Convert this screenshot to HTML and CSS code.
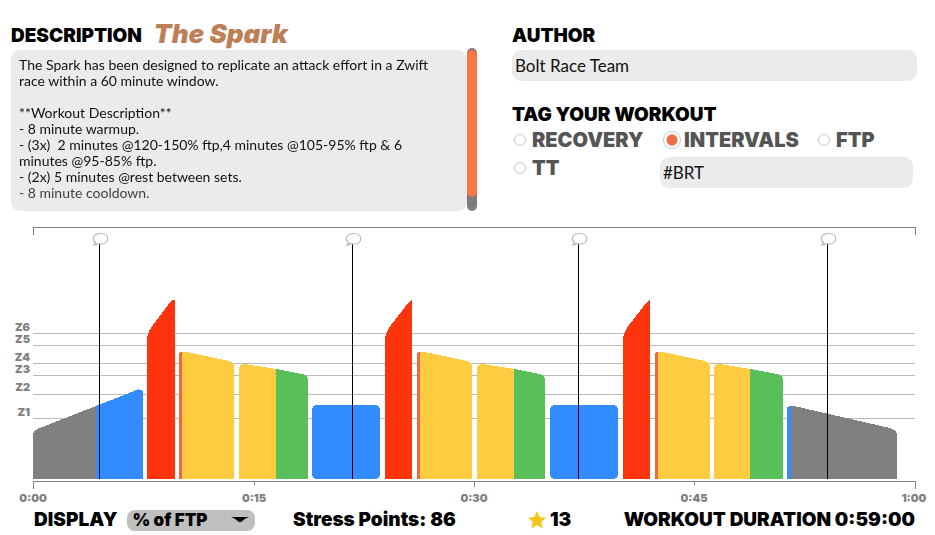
FILE: index.html
```html
<!DOCTYPE html>
<html lang="en">
<head>
<meta charset="utf-8">
<meta name="viewport" content="width=device-width, initial-scale=1">
<title>The Spark</title>
<link rel="stylesheet" href="styles.css">
</head>
<body>
<main class="page">
  <div class="details">
    <section class="description">
      <div class="title-row">
        <h2 class="heading"><label for="description">DESCRIPTION</label></h2>
        <h1 class="workout-name">The Spark</h1>
      </div>
      <div class="description-body">
        <div class="description-box">
          <textarea id="description" class="description-text" spellcheck="false">The Spark has been designed to replicate an attack effort in a Zwift race within a 60 minute window.

**Workout Description**
- 8 minute warmup.
- (3x)  2 minutes @120-150% ftp,4 minutes @105-95% ftp &amp; 6 minutes @95-85% ftp.
- (2x) 5 minutes @rest between sets.
- 8 minute cooldown.</textarea>
        </div>
        <div class="scroll-track"><div class="scroll-thumb"></div></div>
      </div>
    </section>

    <section class="meta">
      <h2 class="heading"><label for="author">AUTHOR</label></h2>
      <input id="author" class="field" type="text" value="Bolt Race Team">
      <h2 class="heading tag-heading">TAG YOUR WORKOUT</h2>
      <div class="tags">
        <label class="tag"><input type="radio" name="tag">RECOVERY</label>
        <label class="tag"><input type="radio" name="tag" checked>INTERVALS</label>
        <label class="tag"><input type="radio" name="tag">FTP</label>
        <label class="tag"><input type="radio" name="tag">TT</label>
        <input class="field custom-tag" type="text" value="#BRT" aria-label="Custom tag">
      </div>
    </section>
  </div>

  <svg class="chart" viewBox="0 220 935 285" role="img" aria-label="Workout power profile">
    <defs>
      <g id="bubble" fill="#fff" stroke="#b5b5b5" stroke-width="1.2">
        <path d="M-4 3.4C-8.500 0-6-5.500 1.500-5.500C10.500-5.500 10.500 4.800 1.500 5Q-.5 5.100-2 4.500Q-3 5.700-5.500 6Q-4 4.800-4 3.400Z"/>
      </g>
    </defs>
    <g class="zones">
      <path d="M33 333.500H915M33 345.500H915M33 363.500H915M33 375.500H915M33 394.500H915M33 418.500H915"/>
    </g>
    <g class="zone-labels">
      <text x="30" y="331">Z6</text>
      <text x="30" y="343">Z5</text>
      <text x="30" y="361">Z4</text>
      <text x="30" y="373">Z3</text>
      <text x="30" y="391">Z2</text>
      <text x="30" y="416">Z1</text>
    </g>
    <g class="axis">
      <path d="M33.500 235V227.500H915.500V235"/>
      <path d="M33.500 489V481.500H915.500V489M254.500 482V485M474.500 482V487M694.500 482V485"/>
    </g>
    <g class="bars">
      <path class="gray" d="M33 479V434Q35 429 41 427.500L96 406V479Z"/>
      <path class="blue" d="M96 479V406L138 389.500Q142 389 143 392V479Z"/>
      <path class="red" d="M147 479V337Q149 330 153 325L171 301Q172 300 175 300V479Z"/>
      <path class="orange" d="M179 479V355Q179 352 182 352V479Z"/>
      <path class="yellow" d="M182 479V352H187L229 361Q234 362 234 367V479Z"/>
      <path class="yellow" d="M239 479V369Q239 364 245 364L276 369V479Z"/>
      <path class="green" d="M276 479V369L302 374Q308 375 308 380V479Z"/>
      <rect class="blue" x="312" y="405" width="68" height="74" rx="5"/>

      <path class="red" d="M385 479V338Q387 330 391 325L409 302Q411 300 412 300V479Z"/>
      <path class="orange" d="M417 479V355Q417 352 420 352V479Z"/>
      <path class="yellow" d="M420 479V352H425L467 361Q472 363 472 367V479Z"/>
      <path class="yellow" d="M477 479V369Q477 364 483 364L514 369V479Z"/>
      <path class="green" d="M514 479V369L539 374Q545 375 545 380V479Z"/>
      <rect class="blue" x="550" y="405" width="68" height="74" rx="5"/>

      <path class="red" d="M623 479V338Q625 330 629 325L647 302Q649 300 650 300V479Z"/>
      <path class="orange" d="M655 479V355Q655 352 658 352V479Z"/>
      <path class="yellow" d="M658 479V352H663L705 361Q710 363 710 367V479Z"/>
      <path class="yellow" d="M714 479V369Q714 364 720 364L750 369V479Z"/>
      <path class="green" d="M750 479V369L777 374Q783 375 783 380V479Z"/>
      <path class="blue" d="M787 479V409Q787 406 791 406V479Z"/>
      <path class="gray" d="M791 479V406H794L890 428Q897 430 897 435V479Z"/>
    </g>
    <g class="markers">
      <path d="M99.500 244V479M352.500 244V479M578.500 244V479M827.500 244V479"/>
    </g>
    <use href="#bubble" x="99.500" y="239"/>
    <use href="#bubble" x="352.500" y="239"/>
    <use href="#bubble" x="578.500" y="239"/>
    <use href="#bubble" x="827.500" y="239"/>
    <g class="time-labels">
      <text x="33" y="502">0:00</text>
      <text x="254" y="502">0:15</text>
      <text x="474" y="502">0:30</text>
      <text x="694" y="502">0:45</text>
      <text x="914" y="502">1:00</text>
    </g>
  </svg>

  <footer class="summary">
    <div class="display">
      <label for="display">DISPLAY</label>
      <span class="select-wrap">
        <select id="display"><option>% of FTP</option><option>Watts</option></select>
        <svg class="caret" viewBox="0 0 18 6" aria-hidden="true"><path d="M0 0H18Q14 1 12 3.500Q9 7 6 3.500Q4 1 0 0Z"/></svg>
      </span>
    </div>
    <div>Stress Points: 86</div>
    <div class="stars">
      <svg class="star" viewBox="0 0 20 20" aria-hidden="true"><path d="M10 1L12.700 7L19 7.700L14.300 12L15.600 18.500L10 15.200L4.400 18.500L5.700 12L1 7.700L7.300 7Z"/></svg>
      <span>13</span>
    </div>
    <div class="duration">WORKOUT DURATION 0:59:00</div>
  </footer>
</main>
</body>
</html>
```
FILE: styles.css
```css
* {
  box-sizing: border-box;
}

body {
  margin: 0;
  background: #fff;
  color: #000;
  font-family: Lato, "Liberation Sans", sans-serif;
}

.page {
  padding-top: 22px;
}

.details {
  display: grid;
  grid-template-columns: 466fr 405fr;
  gap: 35px;
  padding: 0 18px 0 11px;
}

.heading,
.workout-name {
  margin: 0;
  height: 28px;
  line-height: 28px;
  white-space: nowrap;
}

.heading {
  font-family: Inter, sans-serif;
  font-size: 19px;
  font-weight: 900;
}

.title-row {
  display: flex;
  gap: 12px;
}

.workout-name {
  color: #bc7f58;
  font-family: Inter, sans-serif;
  font-size: 26px;
  font-style: italic;
  font-weight: 900;
  line-height: 24px;
}

.description-body {
  display: flex;
  height: 161px;
}

.description-box {
  flex: 1;
  padding: 7px 20px 4px 8px;
  border-radius: 9px;
  background: #ebebeb;
}

.description-text {
  display: block;
  width: 100%;
  height: 100%;
  padding: 0;
  border: 0;
  outline: 0;
  resize: none;
  overflow: hidden;
  background: transparent;
  color: #111;
  font-family: Lato, sans-serif;
  font-size: 14px;
  line-height: 16px;
  -webkit-mask-image: linear-gradient(#000 125px, rgba(0, 0, 0, 0.8) 130px);
  mask-image: linear-gradient(#000 125px, rgba(0, 0, 0, 0.8) 130px);
}

.scroll-track {
  width: 10px;
  margin-top: -2px;
  padding-top: 2px;
  border-radius: 5px;
  background: #7f7c7b;
}

.scroll-thumb {
  height: 147px;
  border-radius: 5px;
  background: #f87647;
}

.field {
  display: block;
  width: 100%;
  height: 31px;
  padding: 0 3px;
  border: 0;
  outline: 0;
  border-radius: 9px;
  background: #ebebeb;
  color: #111;
  font-family: Lato, sans-serif;
  font-size: 17px;
}

.tag-heading {
  margin-top: 20px;
  height: 26px;
}

.tags {
  display: grid;
  grid-template-columns: 152fr 152fr 102fr;
  row-gap: 2px;
  margin-left: -1px;
}

.tag {
  display: flex;
  align-items: center;
  gap: 3px;
  height: 26px;
  color: #555;
  font-family: Inter, sans-serif;
  font-size: 20px;
  font-weight: 900;
}

.tag input {
  appearance: none;
  flex: none;
  width: 12px;
  height: 12px;
  margin: 0 3px;
  border: 1px solid #c8c8c8;
  border-radius: 50%;
}

.tag input:checked {
  width: 18px;
  height: 18px;
  margin: 0;
  background: radial-gradient(circle, #ee6f43 5px, transparent 6px);
}

.custom-tag {
  grid-column: 2 / 4;
  width: auto;
  margin: 2px 4px 0 -3px;
}

.chart {
  display: block;
  width: 100%;
  height: auto;
  margin-top: 9px;
}

.chart path,
.bars rect {
  shape-rendering: crispEdges;
}

#bubble path {
  shape-rendering: auto;
}

.zones {
  stroke: #bbb;
}

.axis {
  fill: none;
  stroke: #808080;
}

.markers {
  stroke: #000;
}

.zone-labels,
.time-labels {
  fill: #808080;
  font-family: Inter, sans-serif;
  font-size: 11px;
  font-weight: 900;
}

.zone-labels {
  text-anchor: end;
}

.time-labels {
  text-anchor: middle;
}

.gray { fill: #808080; }
.blue { fill: #338cff; }
.red { fill: #ff330c; }
.orange { fill: #f2683c; }
.yellow { fill: #ffcb40; }
.green { fill: #59bf59; }

.summary {
  display: grid;
  grid-template-columns: 259fr 234fr 93fr 295fr;
  align-items: center;
  padding: 4px 20px 0 34px;
  font-family: Inter, sans-serif;
  font-size: 19px;
  font-weight: 900;
  line-height: 22px;
  white-space: nowrap;
}

.display,
.stars {
  display: flex;
  align-items: center;
}

.display {
  gap: 10px;
}

.stars {
  gap: 3px;
}

.select-wrap {
  display: grid;
  align-items: center;
  width: 128px;
}

.select-wrap > * {
  grid-area: 1 / 1;
}

.select-wrap select {
  appearance: none;
  width: 100%;
  height: 21px;
  padding: 0 5px;
  border: 0;
  border-radius: 8px;
  background: #bfbfbf;
  color: #000;
  font: inherit;
  font-size: 17px;
  line-height: 21px;
}

.caret {
  justify-self: end;
  width: 18px;
  height: 6px;
  margin-right: 6px;
  pointer-events: none;
}

.star {
  width: 20px;
  height: 20px;
  fill: #f2c71c;
}

.duration {
  justify-self: end;
}
```
